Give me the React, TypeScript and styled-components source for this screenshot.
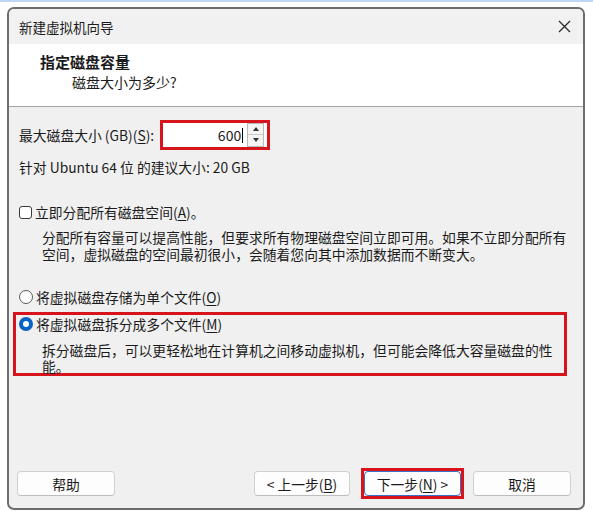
import React from "react";
import styled, { createGlobalStyle } from "styled-components";

const GlobalStyle = createGlobalStyle`
  html, body {
    margin: 0;
    padding: 0;
    background: #fff;
  }
  body {
    font-family: "Noto Sans CJK SC", "Noto Sans", sans-serif;
    color: #1b1b1b;
  }
`;

const red = "#d7141c";

const Page = styled.div`
  width: 593px;
  height: 517px;
  box-sizing: border-box;
  padding: 7px 8px 7px 7px;
  background: linear-gradient(to bottom, #bcd6f3 0 2px, #fff 2px);
`;

const Window = styled.div`
  height: 100%;
  box-sizing: border-box;
  border: 2px solid #6d6d6d;
  border-radius: 7px;
  overflow: hidden;
  display: flex;
  flex-direction: column;
  background: #f0f0f0;
`;

const TitleBar = styled.div`
  height: 35px;
  flex: none;
  display: flex;
  align-items: center;
  justify-content: space-between;
  padding: 0 12px 0 10px;
  font-size: 13.5px;
  background: #f1f1f1;
`;

const Header = styled.div`
  height: 63px;
  flex: none;
  box-sizing: border-box;
  padding: 8px 0 0 31px;
  background: #fff;
  border-bottom: 1px solid #a5a5a5;
`;

const HeaderTitle = styled.div`
  font-size: 15px;
  font-weight: 700;
  line-height: 20px;
`;

const HeaderSub = styled.div`
  font-size: 14px;
  line-height: 20px;
  padding-left: 32px;
`;

const Body = styled.div`
  flex: 1;
  display: flex;
  flex-direction: column;
  padding: 0 16px 0 10px;
  font-size: 13.8px;
`;

const SizeRow = styled.div`
  margin-top: 13px;
  height: 29px;
  display: flex;
  align-items: center;
  gap: 6px;
  line-height: 18px;
`;

const InputFrame = styled.div`
  width: 110px;
  height: 30px;
  box-sizing: border-box;
  border: 3px solid ${red};
  background: #fff;
  display: flex;
  align-items: center;
  padding: 0 3px 0 0;
`;

const Field = styled.div`
  flex: 1;
  text-align: right;
  font-size: 14px;
  padding-right: 4px;
  line-height: 18px;
  &::after {
    content: "";
    display: inline-block;
    width: 1px;
    height: 15px;
    margin-left: 1px;
    vertical-align: -2px;
    background: #000;
  }
`;

const Spinner = styled.div`
  width: 15px;
  height: 22px;
  display: flex;
  flex-direction: column;
  border: 1px solid #b9b9b9;
  background: #f4f4f4;
`;

const SpinBtn = styled.div<{ $down?: boolean }>`
  flex: 1;
  display: flex;
  align-items: center;
  justify-content: center;
  border-top: ${(p) => (p.$down ? "1px solid #c8c8c8" : "none")};
  &::before {
    content: "";
    border-left: 3.5px solid transparent;
    border-right: 3.5px solid transparent;
    ${(p) =>
      p.$down ? "border-top: 4px solid #333;" : "border-bottom: 4px solid #333;"}
  }
`;

const Line = styled.div<{ $top: number }>`
  margin-top: ${(p) => p.$top}px;
  line-height: 18px;
  display: flex;
  align-items: center;
  gap: 3px;
  white-space: nowrap;
`;

const Desc = styled.div<{ $top: number; $lh: number }>`
  margin-top: ${(p) => p.$top}px;
  padding-left: 23px;
  line-height: ${(p) => p.$lh}px;
  white-space: nowrap;
`;

const Check = styled.span`
  width: 13px;
  height: 13px;
  box-sizing: border-box;
  border: 1px solid #3a3a3a;
  border-radius: 3px;
  background: #fff;
  flex: none;
`;

const Radio = styled.span<{ $on?: boolean }>`
  width: 14px;
  height: 14px;
  box-sizing: border-box;
  border-radius: 50%;
  flex: none;
  border: ${(p) => (p.$on ? "4px solid #0a62c4" : "1px solid #5a5a5a")};
  background: #fff;
`;

const RedBox = styled.div`
  margin: 6px 0 0 -6px;
  border: 3px solid ${red};
  padding: 0 0 0 3px;
  height: 64px;
  box-sizing: border-box;
`;

const U = styled.span`
  text-decoration: underline;
  text-underline-offset: 2px;
`;

const Footer = styled.div`
  margin-top: auto;
  display: flex;
  align-items: center;
  padding: 0 12px 9px 8px;
  margin-left: -10px;
  margin-right: -16px;
`;

const Button = styled.div<{ $w: number; $focus?: boolean }>`
  width: ${(p) => p.$w}px;
  height: 25px;
  box-sizing: border-box;
  border: 1px solid ${(p) => (p.$focus ? "#3a6fc4" : "#d0d0d0")};
  border-bottom-color: ${(p) => (p.$focus ? "#3a6fc4" : "#bdbdbd")};
  border-radius: 4px;
  background: #fdfdfd;
  display: flex;
  align-items: center;
  justify-content: center;
  font-size: 13.8px;
  white-space: nowrap;
`;

const Spacer = styled.div`
  flex: 1;
`;

const FocusRing = styled.div`
  border: 3px solid ${red};
  margin: 0 9px 0 11px;
  display: flex;
`;

const CloseIcon = () => (
  <svg width="13" height="13" viewBox="0 0 13 13">
    <path d="M1 1L12 12M12 1L1 12" stroke="#2b2b2b" strokeWidth="1.3" />
  </svg>
);

export default function App() {
  return (
    <Page>
      <GlobalStyle />
      <Window>
        <TitleBar>
          <span>新建虚拟机向导</span>
          <CloseIcon />
        </TitleBar>
        <Header>
          <HeaderTitle>指定磁盘容量</HeaderTitle>
          <HeaderSub>磁盘大小为多少?</HeaderSub>
        </Header>
        <Body>
          <SizeRow>
            <span>
              最大磁盘大小 (GB)(<U>S</U>):
            </span>
            <InputFrame>
              <Field>600</Field>
              <Spinner>
                <SpinBtn />
                <SpinBtn $down />
              </Spinner>
            </InputFrame>
          </SizeRow>
          <Line $top={9}>针对 Ubuntu 64 位 的建议大小: 20 GB</Line>
          <Line $top={27}>
            <Check />
            <span>
              立即分配所有磁盘空间(<U>A</U>)。
            </span>
          </Line>
          <Desc $top={8} $lh={17}>
            分配所有容量可以提高性能，但要求所有物理磁盘空间立即可用。如果不立即分配所有
            <br />
            空间，虚拟磁盘的空间最初很小，会随着您向其中添加数据而不断变大。
          </Desc>
          <Line $top={25}>
            <Radio />
            <span>
              将虚拟磁盘存储为单个文件(<U>O</U>)
            </span>
          </Line>
          <RedBox>
            <Line $top={0}>
              <Radio $on />
              <span>
                将虚拟磁盘拆分成多个文件(<U>M</U>)
              </span>
            </Line>
            <Desc $top={10} $lh={15.5}>
              拆分磁盘后，可以更轻松地在计算机之间移动虚拟机，但可能会降低大容量磁盘的性
              <br />
              能。
            </Desc>
          </RedBox>
          <Footer>
            <Button $w={98}>帮助</Button>
            <Spacer />
            <Button $w={96}>
              &lt; 上一步(<U>B</U>)
            </Button>
            <FocusRing>
              <Button $w={97} $focus>
                下一步(<U>N</U>) &gt;
              </Button>
            </FocusRing>
            <Button $w={98}>取消</Button>
          </Footer>
        </Body>
      </Window>
    </Page>
  );
}
